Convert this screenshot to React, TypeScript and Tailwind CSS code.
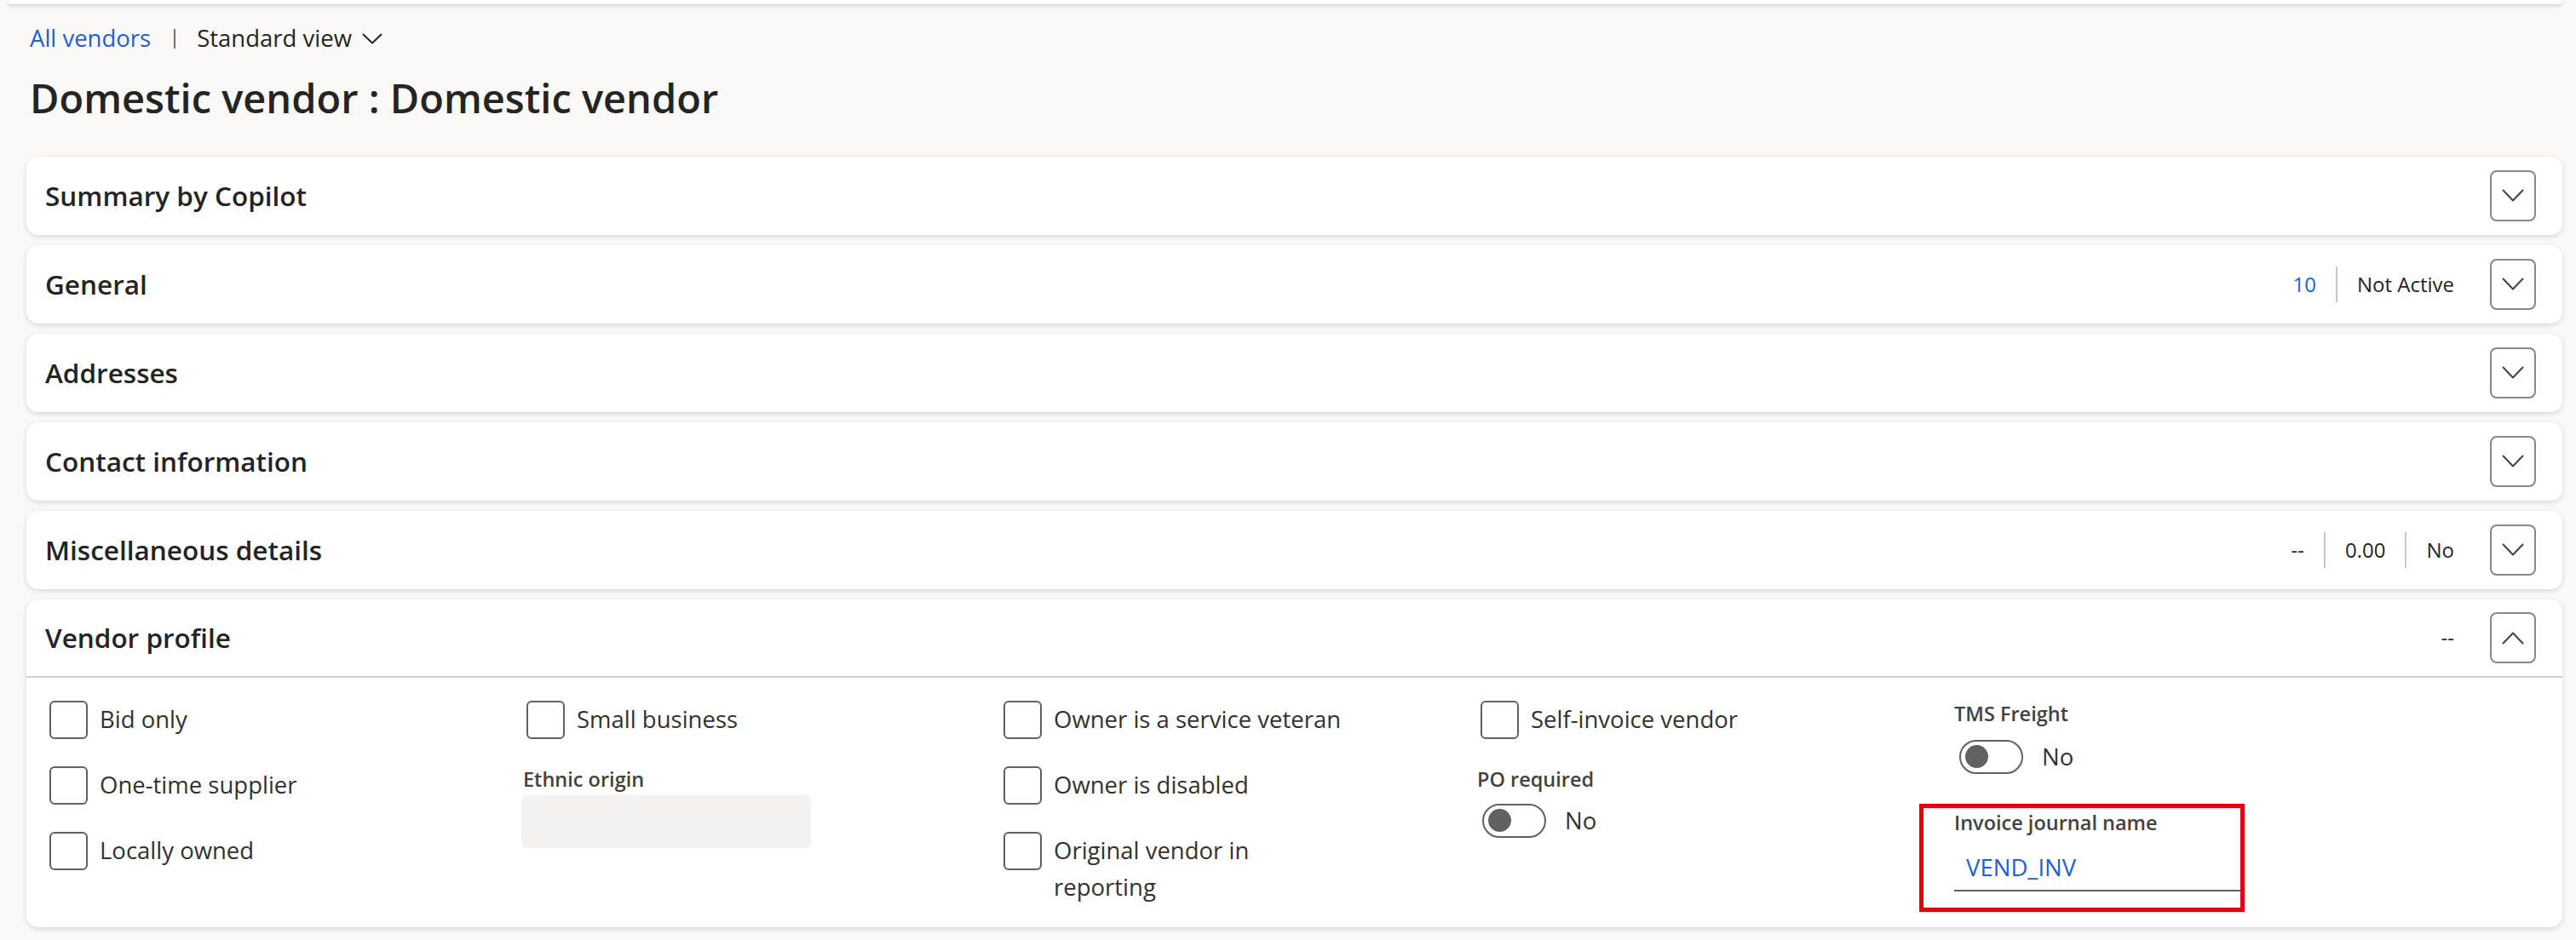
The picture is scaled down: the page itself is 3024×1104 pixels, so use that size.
import React from 'react';

const ChevronDown = () => (
  <svg width="26" height="16" viewBox="0 0 26 16" fill="none">
    <path d="M1.5 1.5 L13 13.5 L24.5 1.5" stroke="#424242" strokeWidth="2" strokeLinecap="round" strokeLinejoin="round" />
  </svg>
);

const ChevronUp = () => (
  <svg width="26" height="16" viewBox="0 0 26 16" fill="none">
    <path d="M1.5 14.5 L13 2.5 L24.5 14.5" stroke="#424242" strokeWidth="2" strokeLinecap="round" strokeLinejoin="round" />
  </svg>
);

const Divider = () => <div className="w-[2px] h-[42px] bg-[#c8c6c4]" />;

interface SectionProps {
  title: string;
  summary?: React.ReactNode[];
  open?: boolean;
  children?: React.ReactNode;
}

const Section = ({ title, summary = [], open = false, children }: SectionProps) => (
  <div className="bg-white rounded-[14px] shadow-[0_2px_6px_rgba(0,0,0,0.14)]">
    <div className={`flex items-center pl-[22px] pr-[31px] ${open ? 'h-[90px]' : 'h-[92px]'}`}>
      <div className="flex-1 text-[31.5px] font-semibold text-[#242424]">{title}</div>
      {summary.length > 0 && (
        <div className="flex items-center gap-[23px] mr-[42px] text-[24px] text-[#242424]">
          {summary.map((item, i) => (
            <React.Fragment key={i}>
              {i > 0 && <Divider />}
              {item}
            </React.Fragment>
          ))}
        </div>
      )}
      <button className="w-[54px] h-[60px] flex items-center justify-center border-2 border-[#8a8886] rounded-[8px] bg-white">
        {open ? <ChevronUp /> : <ChevronDown />}
      </button>
    </div>
    {open && (
      <>
        <div className="h-[2px] bg-[#d1d1d1]" />
        {children}
      </>
    )}
  </div>
);

const Checkbox = ({ label, narrow = false }: { label: string; narrow?: boolean }) => (
  <div className="flex items-start gap-[14px] ml-[4px]">
    <div className="w-[45px] h-[45px] shrink-0 border-[2.5px] border-[#616161] rounded-[6px] bg-white" />
    <div className={`text-[27.5px] leading-[43px] text-[#323130] ${narrow ? 'max-w-[270px]' : ''}`}>{label}</div>
  </div>
);

const FieldLabel = ({ children }: { children: React.ReactNode }) => (
  <div className="text-[23.5px] leading-[28px] font-semibold text-[#424242]">{children}</div>
);

const Toggle = () => (
  <div className="flex items-center gap-[22px] ml-[6px]">
    <div className="w-[75px] h-[40px] rounded-full border-2 border-[#616161] flex items-center pl-[5px]">
      <div className="w-[27px] h-[27px] rounded-full bg-[#616161]" />
    </div>
    <span className="text-[27.5px] text-[#323130]">No</span>
  </div>
);

const VendorProfile = () => (
  <div className="flex pl-[23px] pt-[27px] h-[293px]">
    <div className="w-[560px] flex flex-col gap-[32px]">
      <Checkbox label="Bid only" />
      <Checkbox label="One-time supplier" />
      <Checkbox label="Locally owned" />
    </div>
    <div className="w-[560px] flex flex-col">
      <Checkbox label="Small business" />
      <div className="mt-[33px]">
        <FieldLabel>Ethnic origin</FieldLabel>
      </div>
      <div className="mt-[5px] -ml-[2px] w-[340px] h-[62px] bg-[#f3f2f1] rounded-[6px]" />
    </div>
    <div className="w-[560px] flex flex-col gap-[32px]">
      <Checkbox label="Owner is a service veteran" />
      <Checkbox label="Owner is disabled" />
      <Checkbox label="Original vendor in reporting" narrow />
    </div>
    <div className="w-[560px] flex flex-col">
      <Checkbox label="Self-invoice vendor" />
      <div className="mt-[33px]">
        <FieldLabel>PO required</FieldLabel>
      </div>
      <div className="mt-[14px]">
        <Toggle />
      </div>
    </div>
    <div className="w-[560px] flex flex-col">
      <div className="mt-[1px]">
        <FieldLabel>TMS Freight</FieldLabel>
      </div>
      <div className="mt-[16px]">
        <Toggle />
      </div>
      <div className="relative mt-[43px] w-[336px]">
        <div className="absolute -left-[41px] -top-[8px] -right-[5px] -bottom-[24px] border-[5px] border-[#e3000b]" />
        <FieldLabel>Invoice journal name</FieldLabel>
        <div className="h-[67px] pt-[21px] pl-[14px] border-b-2 border-[#616161] text-[27.5px] leading-[36px] text-[#2160d4]">
          VEND_INV
        </div>
      </div>
    </div>
  </div>
);

export default function App() {
  return (
    <div className="min-h-[1104px] bg-[#faf9f8] font-['Open_Sans','Noto_Sans',sans-serif] overflow-hidden">
      <div className="h-[5px] ml-[8px] mr-[16px] bg-white shadow-[0_2px_4px_rgba(0,0,0,0.16)] rounded-b-[6px]" />
      <div className="pl-[35px] pr-[16px]">
        <div className="h-[50px] mt-[15px] flex items-center text-[27.5px]">
          <span className="text-[#2160d4]">All vendors</span>
          <span className="ml-[27px] mr-[25px] w-[2px] h-[23px] bg-[#8a6d64]" />
          <span className="text-[#242424]">Standard view</span>
          <svg className="ml-[12px]" width="24" height="13" viewBox="0 0 24 13" fill="none">
            <path d="M1.5 1.5 L12 11.5 L22.5 1.5" stroke="#242424" strokeWidth="2" strokeLinecap="round" strokeLinejoin="round" />
          </svg>
        </div>
        <div className="h-[60px] mt-[15px] flex items-center text-[47px] font-semibold text-[#242424]">
          Domestic vendor : Domestic vendor
        </div>
      </div>
      <div className="pl-[31px] pr-[16px] mt-[39px] flex flex-col gap-[12px]">
        <Section title="Summary by Copilot" />
        <Section title="General" summary={[<span className="text-[#2160d4]">10</span>, <span>Not Active</span>]} />
        <Section title="Addresses" />
        <Section title="Contact information" />
        <Section title="Miscellaneous details" summary={[<span>--</span>, <span>0.00</span>, <span>No</span>]} />
        <Section title="Vendor profile" summary={[<span>--</span>]} open>
          <VendorProfile />
        </Section>
      </div>
    </div>
  );
}
